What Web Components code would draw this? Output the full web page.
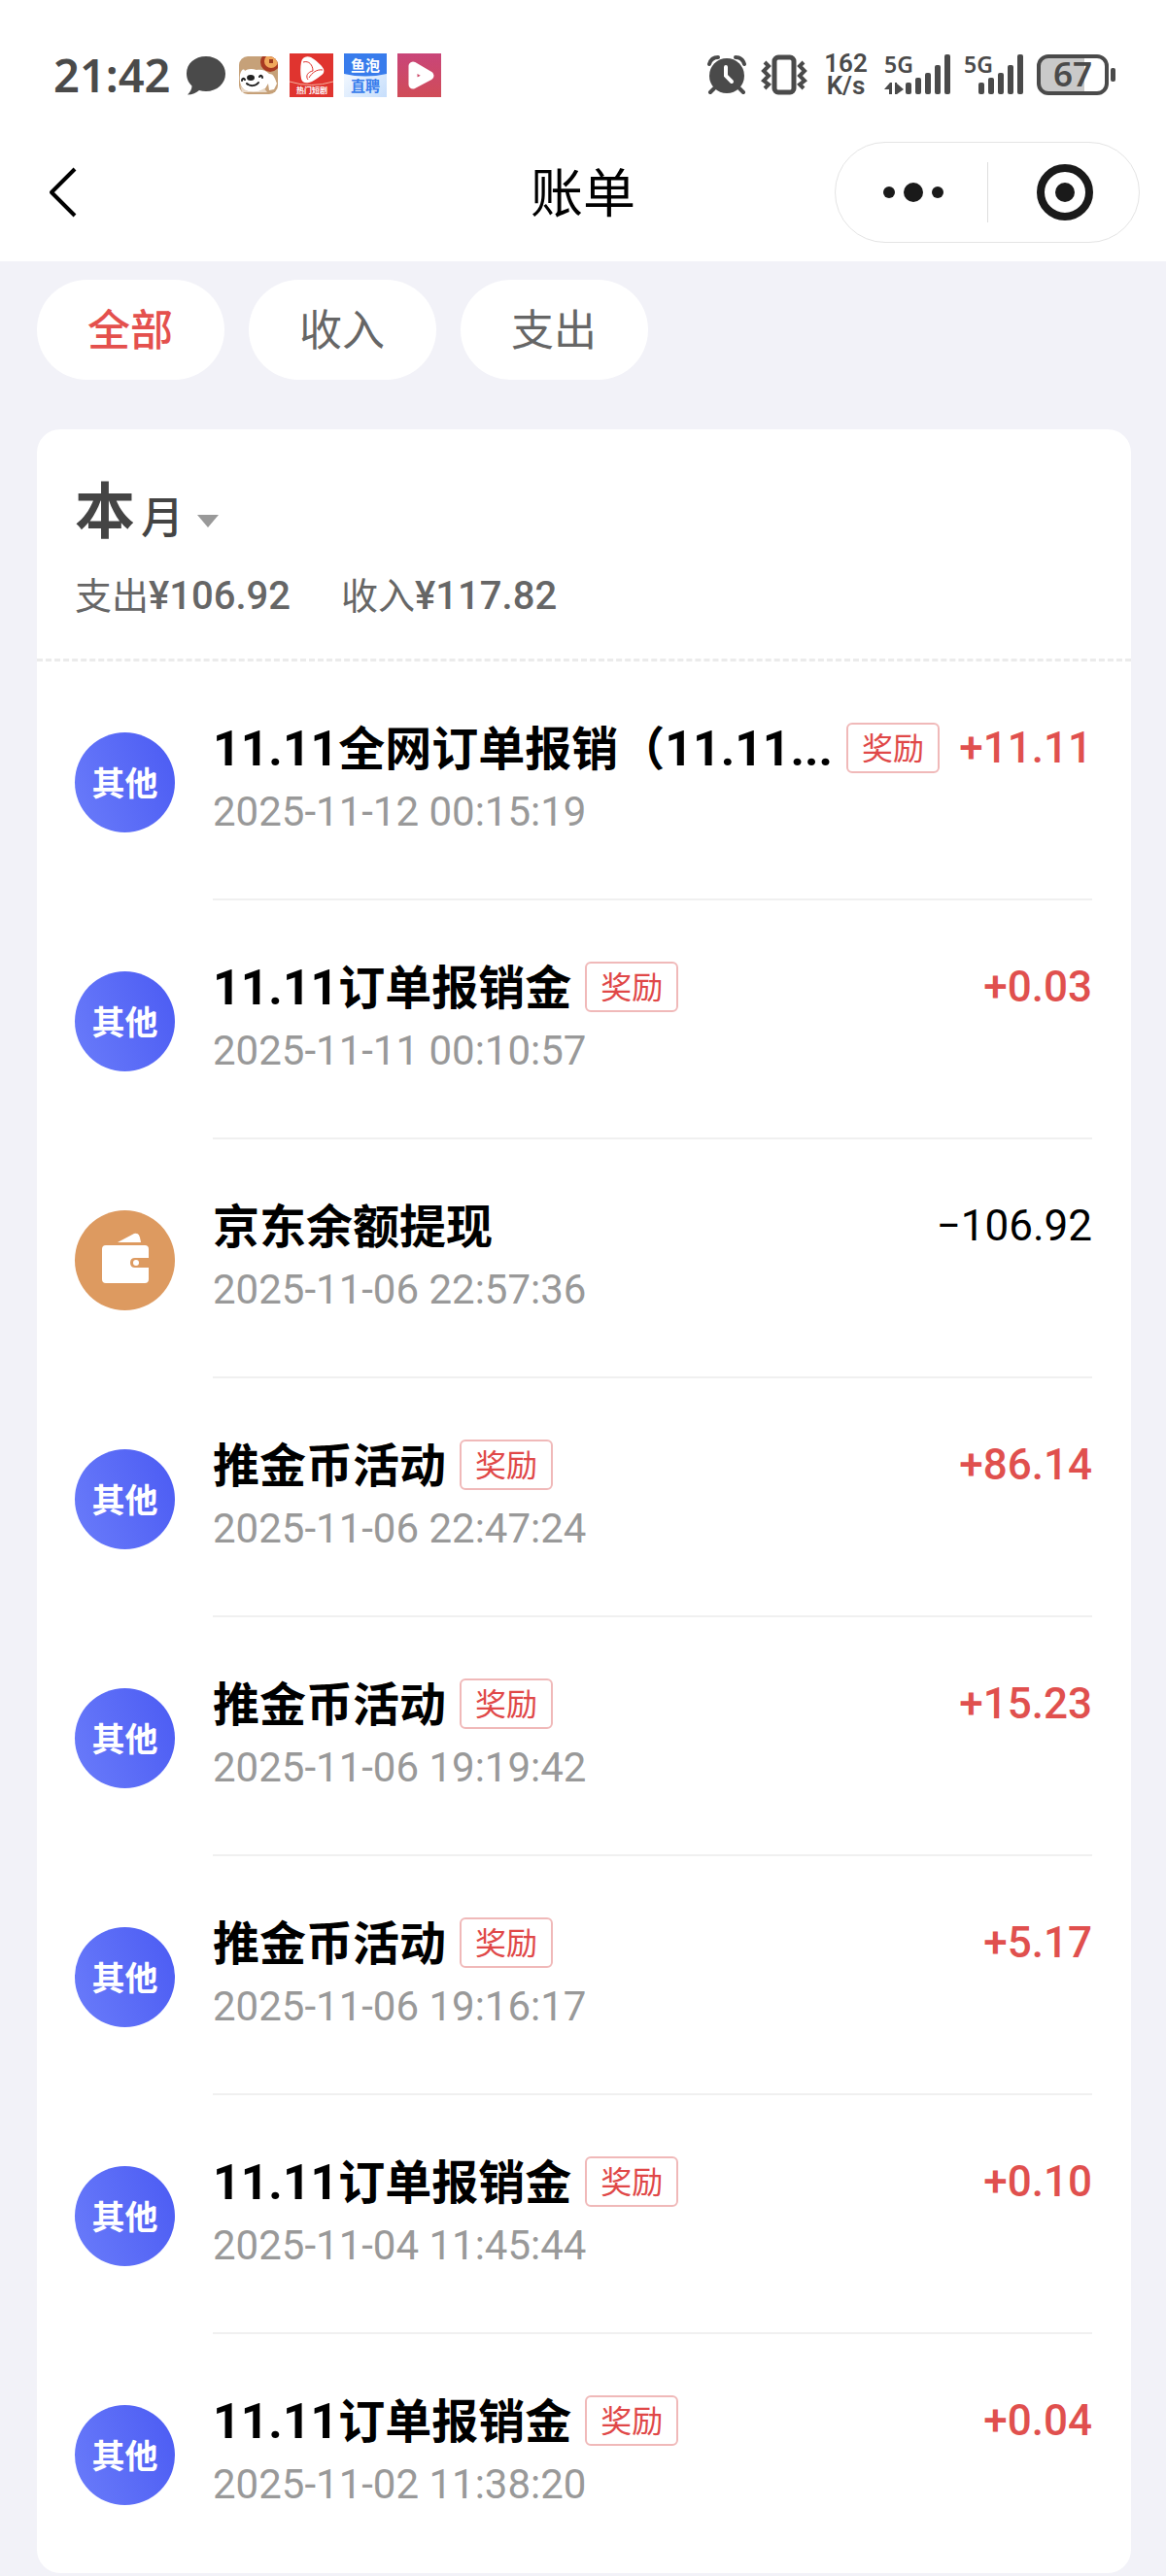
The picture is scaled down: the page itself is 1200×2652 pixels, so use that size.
<!DOCTYPE html>
<html lang="zh-CN">
<head>
<meta charset="utf-8">
<meta name="viewport" content="width=device-width, initial-scale=1">
<title>账单</title>
<style>
  body {
    margin: 0;
    background: #f2f2f8;
    color: #000;
    font-family: "Noto Sans", "Noto Sans CJK SC", sans-serif;
  }
</style>
</head>
<body>
<bill-page>
  <status-bar slot="top" time="21:42" speed="162" battery="67"></status-bar>
  <nav-bar slot="top">账单</nav-bar>

  <filter-tabs>
    <filter-tab active>全部</filter-tab>
    <filter-tab>收入</filter-tab>
    <filter-tab>支出</filter-tab>
  </filter-tabs>

  <bill-card>
    <month-summary slot="head" spent="¥106.92" earned="¥117.82"></month-summary>
    <bill-item time="2025-11-12 00:15:19" amount="+11.11" tag="奖励"><b>11.11</b>全网订单报销（<b>11.11...</b></bill-item>
    <bill-item time="2025-11-11 00:10:57" amount="+0.03" tag="奖励"><b>11.11</b>订单报销金</bill-item>
    <bill-item time="2025-11-06 22:57:36" amount="−106.92" kind="wallet">京东余额提现</bill-item>
    <bill-item time="2025-11-06 22:47:24" amount="+86.14" tag="奖励">推金币活动</bill-item>
    <bill-item time="2025-11-06 19:19:42" amount="+15.23" tag="奖励">推金币活动</bill-item>
    <bill-item time="2025-11-06 19:16:17" amount="+5.17" tag="奖励">推金币活动</bill-item>
    <bill-item time="2025-11-04 11:45:44" amount="+0.10" tag="奖励"><b>11.11</b>订单报销金</bill-item>
    <bill-item time="2025-11-02 11:38:20" amount="+0.04" tag="奖励"><b>11.11</b>订单报销金</bill-item>
  </bill-card>
</bill-page>

<script>
class BillPage extends HTMLElement {
  constructor() {
    super();
    this.attachShadow({ mode: "open" });
    this.shadowRoot.innerHTML = `
      <style>
        :host { display: block; min-height: 100vh; }
        header { background: #fff; }
        main {
          display: flex;
          flex-direction: column;
          gap: 51px;
          padding: 19px 36px 3px 38px;
        }
      </style>
      <header><slot name="top"></slot></header>
      <main><slot></slot></main>
    `;
  }
}
customElements.define("bill-page", BillPage);

class StatusBar extends HTMLElement {
  connectedCallback() {
    this.attachShadow({ mode: "open" });
    this.shadowRoot.innerHTML = `
      <style>
        :host {
          display: flex;
          justify-content: space-between;
          align-items: center;
          height: 98px;
          padding: 28px 51px 0 55px;
          color: #4a4a4a;
        }
        .side { display: flex; align-items: center; }
        svg { display: block; flex: none; overflow: visible; }
        .time { font-size: 47px; line-height: 56px; font-weight: 600; margin-right: 14px; }
        .apps { gap: 11px; }
        .right { gap: 14px; }
        .speed {
          width: 51px;
          font-family: Roboto, sans-serif;
          font-size: 26px;
          line-height: 23px;
          font-weight: 600;
          text-align: center;
        }
        .speed span { display: block; }
        .battery { font-size: 35px; font-weight: 600; }
      </style>
      <div class="side">
        <span class="time">${this.getAttribute("time")}</span>
        <div class="side apps">
          <svg width="44" height="44" viewBox="0 0 44 44" fill="#4a4a4a">
            <path d="M22 3C10.500 3 2 10.500 2 20.500c0 6 2.500 10 5.500 13 0 3-1.500 6-4.500 9 5 0 9-2 12-4.500 2.200.6 4.500 1 7 1 11.500 0 20-8 20-18S33.500 3 22 3z"/>
          </svg>
          <svg width="42" height="44" viewBox="0 0 42 44">
            <defs><clipPath id="round"><rect x="1" y="3" width="40" height="39" rx="9"/></clipPath></defs>
            <g clip-path="url(#round)">
              <rect width="42" height="44" fill="#c6a179"/>
              <circle cx="33" cy="9" r="10" fill="#a83a22"/>
              <circle cx="34" cy="8" r="7" fill="#f0a85c"/>
              <rect x="32" y="6" width="4" height="4" fill="#9c3a20"/>
              <path d="M2 22c-1 8 1 15 8 17 7 2 14 0 18-3l3-5 1 7 5-1 3-6c-2-5-3-10-8-10-3-4-9-5-13-4-5-2-10-1-12 1-1-3-4-1-5 4z" fill="#fff"/>
              <path d="M2 32c3 8 16 10 25 4l3 4H4z" fill="#e9d9c8"/>
              <ellipse cx="13" cy="25" rx="4" ry="3" fill="#222"/>
              <path d="M4 28c0-2 2-3 3-1M22 24c1-2 3-1 3 1M9 31c3 3 9 3 12-1" fill="none" stroke="#222" stroke-width="2" stroke-linecap="round"/>
            </g>
          </svg>
          <svg width="45" height="45" viewBox="0 0 45 45">
            <rect width="45" height="45" fill="#e0342f"/>
            <path d="M12 9c1-5 5-7 10-5 5 3 11 8 13 12 1 3 0 5-3 7-4 3-8 6-12 7-4 1-7 0-8-4-1-5-1-12 0-17z" fill="#fff"/>
            <path d="M14 9c6-2 10 3 10 9M34 17c-6-1-11 3-14 8M19 27c-3-4 0-8 5-9" fill="none" stroke="#e0342f" stroke-width="1"/>
            <path d="M0 29q22 7 45 0" fill="none" stroke="#f5b09c" stroke-width="1"/>
            <text x="23" y="41" font-size="8" font-weight="700" text-anchor="middle" fill="#fff">热门短剧</text>
          </svg>
          <svg width="44" height="45" viewBox="0 0 44 45">
            <defs><linearGradient id="sky" x1="0" y1="0" x2="1" y2="1"><stop offset="0" stop-color="#fff"/><stop offset="1" stop-color="#c6defc"/></linearGradient></defs>
            <rect width="44" height="45" fill="url(#sky)"/>
            <path d="M0 0h44v21q-22 5-44 0z" fill="#387cec"/>
            <text x="22" y="18" font-size="15" font-weight="700" text-anchor="middle" fill="#fff">鱼泡</text>
            <text x="22" y="39" font-size="15" font-weight="700" text-anchor="middle" fill="#387cec">直聘</text>
          </svg>
          <svg width="45" height="45" viewBox="0 0 45 45">
            <defs><linearGradient id="rose" x1="0" y1="0" x2="0" y2="1"><stop offset="0" stop-color="#c94579"/><stop offset="1" stop-color="#d04c58"/></linearGradient></defs>
            <rect width="45" height="45" fill="url(#rose)"/>
            <path d="M16 13v19l17-9z" fill="none" stroke="#fff" stroke-width="9" stroke-linejoin="round"/>
          </svg>
        </div>
      </div>
      <div class="side right">
        <svg width="42" height="42" viewBox="0 0 42 42" fill="#4a4a4a" stroke="#4a4a4a">
          <circle cx="21" cy="22" r="18" stroke="none"/>
          <path d="M3 10Q5 3 12 3M39 10Q37 3 30 3" fill="none" stroke-width="4" stroke-linecap="round"/>
          <path d="M8 35l-4 4M34 35l4 4" stroke-width="4" stroke-linecap="round"/>
          <path d="M20 13v9l6 6" fill="none" stroke="#fff" stroke-width="4" stroke-linecap="round"/>
        </svg>
        <svg width="48" height="42" viewBox="0 0 48 42" fill="none" stroke="#4a4a4a">
          <rect x="14" y="3" width="20" height="36" rx="4" stroke-width="5"/>
          <path d="M4 8l4 4-5 5 5 5-5 5 5 4-4 4M44 8l-4 4 5 5-5 5 5 5-5 4 4 4" stroke-width="4"/>
        </svg>
        <div class="speed"><span>${this.getAttribute("speed")}</span><span>K/s</span></div>
        ${this.signal(true)}
        ${this.signal(false)}
        <svg class="battery" width="82" height="42" viewBox="0 0 82 42">
          <path d="M12 3h37v36H12q-9 0-9-9V12q0-9 9-9z" fill="#c9c9c9"/>
          <rect x="2" y="2" width="70" height="38" rx="10" fill="none" stroke="#4a4a4a" stroke-width="4"/>
          <rect x="76" y="14" width="5" height="14" rx="2" fill="#4a4a4a"/>
          <text x="37" y="33" text-anchor="middle" fill="#4a4a4a">${this.getAttribute("battery")}</text>
        </svg>
      </div>
    `;
  }

  // five bars; the first card also shows its data arrows
  signal(data) {
    const x = data ? 22 : 15;
    const tops = [29, 24, 19, 11, 0];
    const bars = tops.map((top, i) =>
      `<rect x="${x + i * 10}" y="${top}" width="6" height="${41 - top}" rx="2"/>`).join("");
    const arrows = data
      ? `<path d="M0 36l6-7h2v12H5v-5zM11 29h2v12h-2zM13 30l7 6-7 5z"/>`
      : "";
    return `
      <svg width="${data ? 68 : 61}" height="42" viewBox="0 0 ${data ? 68 : 61} 42" fill="#4a4a4a">
        <text x="0" y="19" font-size="23" font-weight="600">5G</text>
        ${bars}${arrows}
      </svg>`;
  }
}
customElements.define("status-bar", StatusBar);

class NavBar extends HTMLElement {
  constructor() {
    super();
    this.attachShadow({ mode: "open" });
    this.shadowRoot.innerHTML = `
      <style>
        :host {
          display: grid;
          grid-template-columns: 1fr auto 1fr;
          align-items: center;
          height: 143px;
          padding: 0 27px;
        }
        h1 {
          margin: 0;
          font-size: 54px;
          line-height: 72px;
          font-weight: 400;
        }
        button {
          display: flex;
          align-items: center;
          justify-content: center;
          padding: 0;
          border: 0;
          background: none;
          cursor: pointer;
        }
        .back { width: 74px; height: 80px; }
        .capsule {
          justify-self: end;
          display: flex;
          align-items: center;
          box-sizing: border-box;
          width: 314px;
          height: 104px;
          border: 1px solid #e4e4e4;
          border-radius: 52px;
        }
        .capsule button { flex: 1; height: 100%; padding-left: 4px; }
        .capsule i { width: 1px; height: 62px; background: #dedede; }
      </style>
      <button class="back" aria-label="返回">
        <svg width="32" height="54" viewBox="0 0 32 54" fill="none" stroke="#000" stroke-width="4">
          <path d="M29 3L5 27l24 24" stroke-linejoin="round"/>
        </svg>
      </button>
      <h1><slot></slot></h1>
      <div class="capsule">
        <button aria-label="更多">
          <svg width="62" height="20" viewBox="0 0 62 20" fill="#1a1a1a">
            <circle cx="6" cy="10" r="6"/><circle cx="31" cy="10" r="10"/><circle cx="56" cy="10" r="6"/>
          </svg>
        </button>
        <i></i>
        <button aria-label="关闭">
          <svg width="58" height="58" viewBox="0 0 58 58">
            <circle cx="29" cy="29" r="25" fill="none" stroke="#1a1a1a" stroke-width="8"/>
            <circle cx="29" cy="29" r="10" fill="#1a1a1a"/>
          </svg>
        </button>
      </div>
    `;
  }
}
customElements.define("nav-bar", NavBar);

class FilterTabs extends HTMLElement {
  constructor() {
    super();
    this.attachShadow({ mode: "open" });
    this.shadowRoot.innerHTML = `
      <style>
        :host { display: flex; gap: 25px; }
      </style>
      <slot></slot>
    `;
  }
}
customElements.define("filter-tabs", FilterTabs);

class FilterTab extends HTMLElement {
  constructor() {
    super();
    this.attachShadow({ mode: "open" });
    this.shadowRoot.innerHTML = `
      <style>
        :host { display: block; }
        button {
          display: block;
          padding: 19px 53px 20px 52px;
          border: 0;
          border-radius: 52px;
          background: #fff;
          color: #666;
          font-family: inherit;
          font-size: 44px;
          line-height: 64px;
          cursor: pointer;
        }
        :host([active]) button { color: #e4504d; font-weight: 500; }
      </style>
      <button><slot></slot></button>
    `;
  }
}
customElements.define("filter-tab", FilterTab);

class BillCard extends HTMLElement {
  constructor() {
    super();
    this.attachShadow({ mode: "open" });
    this.shadowRoot.innerHTML = `
      <style>
        :host { display: block; background: #fff; border-radius: 24px; }
        .list { padding: 0 40px 0 39px; }
      </style>
      <slot name="head"></slot>
      <div class="list"><slot></slot></div>
    `;
  }
}
customElements.define("bill-card", BillCard);

class MonthSummary extends HTMLElement {
  connectedCallback() {
    this.attachShadow({ mode: "open" });
    this.shadowRoot.innerHTML = `
      <style>
        :host {
          display: block;
          padding: 39px 40px 34px 39px;
          border-bottom: 3px dashed #ebebeb;
        }
        button {
          display: flex;
          align-items: baseline;
          padding: 0;
          border: 0;
          background: none;
          color: #444;
          font-family: inherit;
          font-size: 44px;
          line-height: 88px;
          font-weight: 500;
          cursor: pointer;
        }
        strong { font-size: 62px; font-weight: 700; margin-right: 6px; }
        svg { margin-left: 14px; align-self: center; margin-top: 16px; }
        .totals {
          display: flex;
          gap: 52px;
          margin-top: 6px;
          color: #666;
          font-size: 38px;
          line-height: 60px;
        }
        b { font-family: Roboto, sans-serif; font-size: 40px; font-weight: 500; }
      </style>
      <button>
        <strong>本</strong>月
        <svg width="22" height="13" viewBox="0 0 22 13" fill="#999"><path d="M0 0h22L11 13z"/></svg>
      </button>
      <div class="totals">
        <span>支出<b>${this.getAttribute("spent")}</b></span>
        <span>收入<b>${this.getAttribute("earned")}</b></span>
      </div>
    `;
  }
}
customElements.define("month-summary", MonthSummary);

class BillItem extends HTMLElement {
  connectedCallback() {
    const amount = this.getAttribute("amount");
    const tag = this.getAttribute("tag");
    const wallet = this.getAttribute("kind") === "wallet";

    this.attachShadow({ mode: "open" });
    this.shadowRoot.innerHTML = `
      <style>
        :host { display: flex; gap: 39px; }
        .avatar {
          flex: none;
          display: flex;
          align-items: center;
          justify-content: center;
          width: 103px;
          height: 103px;
          margin-top: 73px;
          border-radius: 50%;
          background: linear-gradient(70deg, #6a7cfa, #4b5bf3);
          color: #fff;
          font-size: 34px;
          line-height: 44px;
          font-weight: 700;
        }
        .wallet { background: #dd9a60; }
        .body {
          flex: 1;
          min-width: 0;
          box-sizing: border-box;
          height: 246px;
          padding-top: 57px;
          border-bottom: 2px solid #f0f0f0;
        }
        :host(:last-of-type) .body { border-color: transparent; }
        .line { display: flex; align-items: center; height: 64px; }
        .title {
          overflow: hidden;
          white-space: nowrap;
          font-size: 48px;
          line-height: 64px;
          font-weight: 700;
        }
        ::slotted(b) {
          font-family: Roboto, sans-serif;
          font-size: 50px;
          font-weight: 700;
        }
        .tag {
          flex: none;
          margin-left: 14px;
          padding: 0 14px;
          border: 2px solid #f0b9b9;
          border-radius: 6px;
          color: #e04848;
          font-size: 32px;
          line-height: 48px;
        }
        .amount {
          flex: none;
          margin-left: auto;
          color: #e0504e;
          font-family: Roboto, sans-serif;
          font-size: 44px;
          line-height: 64px;
          font-weight: 500;
        }
        .out { color: #000; font-weight: 400; }
        time {
          display: block;
          margin-top: 7px;
          color: #999;
          font-family: Roboto, sans-serif;
          font-size: 42px;
          line-height: 54px;
        }
      </style>
      ${wallet ? `
      <div class="avatar wallet">
        <svg width="52" height="58" viewBox="0 0 52 58" fill="#fff">
          <path d="M18 10L35 1q5-1 6 4l1 5z"/>
          <path d="M6 13h40q4 0 4 4v9H36q-5 0-5 5t5 5h14v12q0 4-4 4H6q-4 0-4-4V17q0-4 4-4z"/>
          <circle cx="37" cy="31" r="3"/>
        </svg>
      </div>` : `<div class="avatar">其他</div>`}
      <div class="body">
        <div class="line">
          <span class="title"><slot></slot></span>
          ${tag ? `<span class="tag">${tag}</span>` : ""}
          <span class="amount ${amount[0] === "+" ? "" : "out"}">${amount}</span>
        </div>
        <time>${this.getAttribute("time")}</time>
      </div>
    `;
  }
}
customElements.define("bill-item", BillItem);
</script>
</body>
</html>
